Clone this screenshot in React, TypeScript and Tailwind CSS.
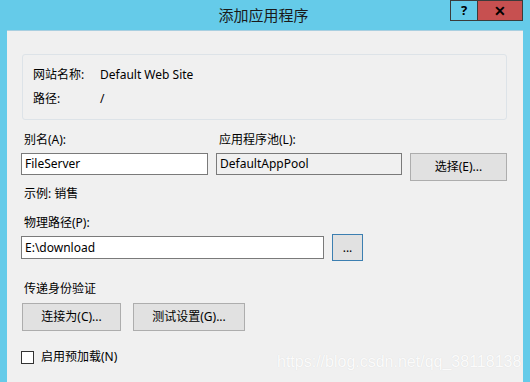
import React from "react";

const font = "font-['Noto_Sans','Noto_Sans_CJK_SC',sans-serif]";

const WinButton = ({ label, w }: { label: string; w: string }) => (
  <button
    className={`${w} h-[28px] bg-[#e1e1e1] border border-[#adadad] text-[12px] text-black flex items-center justify-center`}
  >
    {label}
  </button>
);

const AddApplicationDialog = () => {
  return (
    <div className={`w-[530px] h-[382px] bg-[#65cbe9] flex flex-col overflow-hidden relative ${font}`}>
      {/* Title bar */}
      <div className="h-[30px] flex shrink-0">
        <div className="flex-1" />
        <div className="text-[15px] leading-[30px] text-[#1a1a1a] pl-[4px]">添加应用程序</div>
        <div className="flex-1 flex justify-end pr-[7px]">
          <div className="flex h-[21px] border border-[#3b3b3b]">
            <div className="w-[27px] flex items-center justify-center border-r border-[#3b3b3b] text-[13px] font-bold text-black">
              ?
            </div>
            <div className="w-[44px] bg-[#c75050] flex items-center justify-center text-[14px] font-bold text-black">
              ✕
            </div>
          </div>
        </div>
      </div>

      {/* Body */}
      <div className="flex-1 mx-[7px] bg-[#f0f0f0] border-t border-[#a9cfe0] pl-[14px] pr-[16px] text-[12px] text-black">
        {/* Site info group */}
        <div className="ml-[1px] mt-[23px] h-[66px] border border-[#dde3e8] rounded-[3px] pt-[8px] pl-[10px]">
          <div className="flex h-[24px] items-center">
            <span className="w-[67px]">网站名称:</span>
            <span>Default Web Site</span>
          </div>
          <div className="flex h-[24px] items-center">
            <span className="w-[67px]">路径:</span>
            <span>/</span>
          </div>
        </div>

        {/* Alias / app pool */}
        <div className="flex mt-[10px] h-[20px] items-center">
          <span className="w-[198px] pl-[3px]">别名(A):</span>
          <span>应用程序池(L):</span>
        </div>
        <div className="flex items-start mt-[3px]">
          <div className="w-[187px] h-[22px] bg-white border border-[#7a7a7a] px-[3px] flex items-center">
            FileServer
          </div>
          <div className="ml-[8px] w-[186px] h-[22px] bg-[#f0f0f0] border border-[#7a7a7a] px-[3px] flex items-center">
            DefaultAppPool
          </div>
          <div className="ml-[8px]">
            <WinButton label="选择(E)..." w="w-[97px]" />
          </div>
        </div>

        <div className="mt-[3px] h-[20px] flex items-center pl-[3px]">示例: 销售</div>

        {/* Physical path */}
        <div className="mt-[9px] h-[20px] flex items-center pl-[3px]">物理路径(P):</div>
        <div className="flex items-start mt-[1px]">
          <div className="mt-[2px] w-[303px] h-[23px] bg-white border border-[#7a7a7a] px-[3px] flex items-center">
            E:\download
          </div>
          <button className="ml-[8px] w-[31px] h-[27px] bg-[#e1e1e1] border border-[#3c7fb1] flex items-center justify-center text-[12px]">
            ...
          </button>
        </div>

        {/* Pass-through authentication */}
        <div className="mt-[18px] h-[20px] flex items-center pl-[3px]">传递身份验证</div>
        <div className="flex mt-[4px] gap-[12px] ml-[1px]">
          <WinButton label="连接为(C)..." w="w-[99px]" />
          <WinButton label="测试设置(G)..." w="w-[112px]" />
        </div>

        <div className="mt-[16px] h-[20px] flex items-center">
          <div className="w-[13px] h-[13px] bg-white border border-[#333333]" />
          <span className="ml-[7px]">启用预加载(N)</span>
        </div>
      </div>

      {/* Watermark */}
      <div className="absolute left-[277px] top-[352px] text-[16px] leading-[20px] font-['Liberation_Sans',sans-serif] text-white/90 [text-shadow:0_0_1px_rgba(0,0,0,0.12)]">
        https://blog.csdn.net/qq_38118138
      </div>
    </div>
  );
};

export default function App() {
  return <AddApplicationDialog />;
}
